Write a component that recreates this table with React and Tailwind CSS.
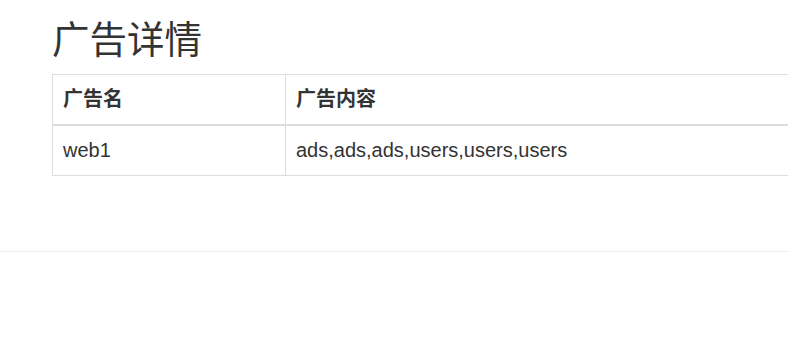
import React from "react";

const ads = [{ name: "web1", content: "ads,ads,ads,users,users,users" }];

const App = () => {
  return (
    <div
      className="w-full min-h-[339px] overflow-hidden bg-white text-[#333]"
      style={{ fontFamily: '"Liberation Sans", "Noto Sans CJK SC", sans-serif' }}
    >
      <div className="pl-[52px]">
        <h1 className="mt-[18px] mb-[12px] text-[37.5px] leading-[44px] font-normal">广告详情</h1>

        <table className="w-[800px] border-collapse border border-[#ddd] text-[20px] leading-[29px]">
          <thead>
            <tr className="text-left">
              <th className="w-[233px] border border-b-2 border-[#ddd] px-[10px] py-[10px] font-bold">广告名</th>
              <th className="border border-b-2 border-[#ddd] px-[10px] py-[10px] font-bold">广告内容</th>
            </tr>
          </thead>
          <tbody>
            {ads.map((ad) => (
              <tr key={ad.name}>
                <td className="border border-[#ddd] px-[10px] py-[10px]">{ad.name}</td>
                <td className="border border-[#ddd] px-[10px] py-[10px]">{ad.content}</td>
              </tr>
            ))}
          </tbody>
        </table>
      </div>

      <hr className="mt-[75px] border-t border-[#eee]" />
    </div>
  );
};

export default App;
